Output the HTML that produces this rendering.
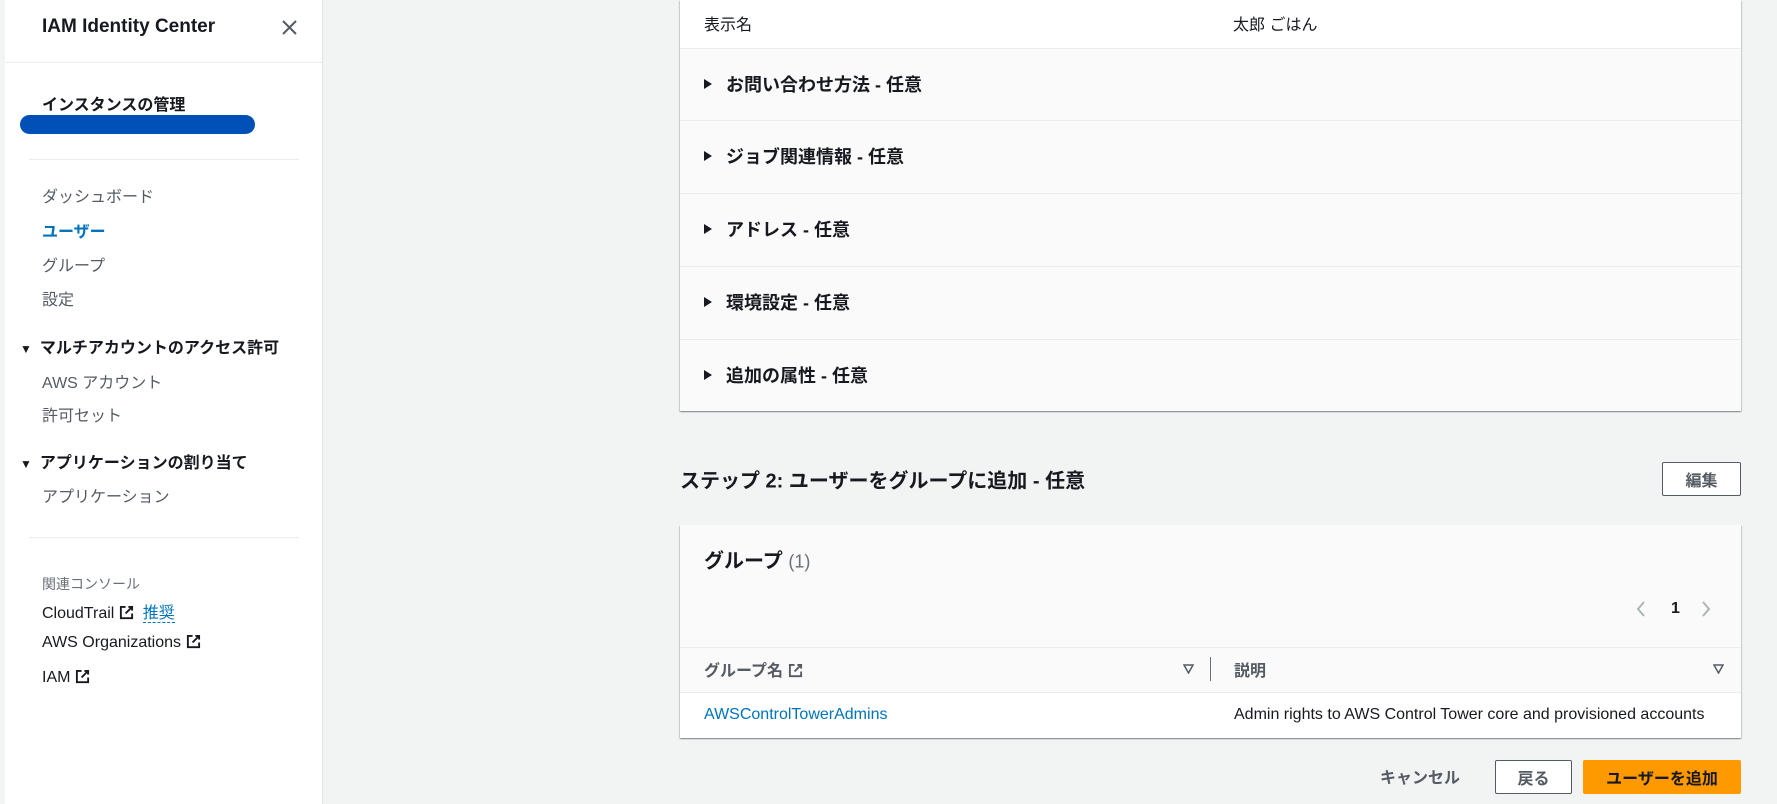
<!DOCTYPE html>
<html><head><meta charset="utf-8"><style>
*{margin:0;padding:0;box-sizing:border-box}
body{width:1777px;height:804px;overflow:hidden;background:#f2f3f3;font-family:"Liberation Sans","Noto Sans CJK JP",sans-serif;color:#16191f;position:relative}
.a{position:absolute;white-space:nowrap}
#side{position:absolute;left:5px;top:0;width:318px;height:804px;background:#fff;border-right:1px solid #dfe3e3}
.nav{font-size:16px;color:#545b64;transform:translateY(-50%)}
.b{font-weight:bold;color:#16191f}
.hl{position:absolute;height:1px;background:#eaeded}
.panel{position:absolute;left:680px;width:1061px;background:#fafafa;box-shadow:0 1px 1px 0 rgba(0,28,36,.3),1px 1px 1px 0 rgba(0,28,36,.15),-1px 1px 1px 0 rgba(0,28,36,.15)}
.row{position:absolute;left:0;width:100%;border-top:1px solid #eaeded}
.exp{position:absolute;left:24px;font-size:18px;font-weight:bold;transform:translateY(-50%)}
.tri{display:inline-block;width:0;height:0;border-left:8px solid #16191f;border-top:5px solid transparent;border-bottom:5px solid transparent;margin-right:14px;vertical-align:2px}
.btn{position:absolute;border:1px solid #545b64;background:#fff;font-size:16px;font-weight:bold;color:#545b64;display:flex;align-items:center;justify-content:center;border-radius:2px}
.ext{display:inline-block;vertical-align:-2px;margin-left:5px}
</style></head><body>
<div id="side">
<div class="a b" style="left:37px;top:27px;transform:translateY(-50%);font-size:19px">IAM Identity Center</div>
<svg class="a" style="left:277px;top:20px" width="15" height="15" viewBox="0 0 15 15"><path d="M1 1L14 14M14 1L1 14" stroke="#545b64" stroke-width="2"/></svg>
<div class="hl" style="left:0;top:62px;width:317px"></div>
<div class="a b nav" style="left:37px;top:103px;color:#16191f">インスタンスの管理</div>
<div class="a" style="left:15px;top:115px;width:235px;height:19px;background:#0050b8;border-radius:10px"></div>
<div class="hl" style="left:24px;top:159px;width:270px"></div>
<div class="a nav" style="left:37px;top:195px">ダッシュボード</div>
<div class="a nav" style="left:37px;top:230px;color:#0073bb;font-weight:bold">ユーザー</div>
<div class="a nav" style="left:37px;top:264px">グループ</div>
<div class="a nav" style="left:37px;top:298px">設定</div>
<div class="a nav b" style="left:15px;top:346px"><span style="font-size:12px;margin-right:8px">▼</span>マルチアカウントのアクセス許可</div>
<div class="a nav" style="left:37px;top:381px">AWS アカウント</div>
<div class="a nav" style="left:37px;top:414px">許可セット</div>
<div class="a nav b" style="left:15px;top:461px"><span style="font-size:12px;margin-right:8px">▼</span>アプリケーションの割り当て</div>
<div class="a nav" style="left:37px;top:495px">アプリケーション</div>
<div class="hl" style="left:24px;top:537px;width:270px"></div>
<div class="a nav" style="left:37px;top:584px;font-size:14px;color:#687078">関連コンソール</div>
<div class="a nav" style="left:37px;top:611px;color:#16191f">CloudTrail<svg class="ext" width="15" height="15" viewBox="0 0 16 16"><path d="M7 2H2v12h12V9M10 2h4v4M14 2L7 9" stroke="#16191f" stroke-width="2" fill="none"/></svg> <span style="color:#0073bb;border-bottom:1px dashed #0073bb;margin-left:4px">推奨</span></div>
<div class="a nav" style="left:37px;top:643px;color:#16191f">AWS Organizations<svg class="ext" width="15" height="15" viewBox="0 0 16 16"><path d="M7 2H2v12h12V9M10 2h4v4M14 2L7 9" stroke="#16191f" stroke-width="2" fill="none"/></svg></div>
<div class="a nav" style="left:37px;top:678px;color:#16191f">IAM<svg class="ext" width="15" height="15" viewBox="0 0 16 16"><path d="M7 2H2v12h12V9M10 2h4v4M14 2L7 9" stroke="#16191f" stroke-width="2" fill="none"/></svg></div>
</div>

<div class="panel" style="top:0;height:411px">
<div class="row" style="top:0;height:48px;background:#fff;border:0"></div>
<div class="a" style="left:24px;top:23px;transform:translateY(-50%);font-size:16px">表示名</div>
<div class="a" style="left:553px;top:23px;transform:translateY(-50%);font-size:16px">太郎 ごはん</div>
<div class="row" style="top:48px"></div><div class="exp" style="top:84px"><span class="tri"></span>お問い合わせ方法 - 任意</div>
<div class="row" style="top:120px"></div><div class="exp" style="top:156px"><span class="tri"></span>ジョブ関連情報 - 任意</div>
<div class="row" style="top:193px"></div><div class="exp" style="top:229px"><span class="tri"></span>アドレス - 任意</div>
<div class="row" style="top:266px"></div><div class="exp" style="top:302px"><span class="tri"></span>環境設定 - 任意</div>
<div class="row" style="top:339px"></div><div class="exp" style="top:375px"><span class="tri"></span>追加の属性 - 任意</div>
</div>

<div class="a b" style="left:680px;top:479px;transform:translateY(-50%);font-size:20px">ステップ 2: ユーザーをグループに追加 - 任意</div>
<div class="btn" style="left:1662px;top:462px;width:79px;height:34px">編集</div>

<div class="panel" style="top:525px;height:213px">
<div class="a b" style="left:24px;top:34px;transform:translateY(-50%);font-size:20px">グループ <span style="font-weight:normal;color:#687078;font-size:18px">(1)</span></div>
<svg class="a" style="left:955px;top:75px" width="12" height="18" viewBox="0 0 12 18"><path d="M9 2L3 9l6 7" stroke="#aab7b8" stroke-width="2" fill="none"/></svg>
<div class="a b" style="left:991px;top:84px;transform:translateY(-50%);font-size:16px">1</div>
<svg class="a" style="left:1020px;top:75px" width="12" height="18" viewBox="0 0 12 18"><path d="M3 2l6 7-6 7" stroke="#aab7b8" stroke-width="2" fill="none"/></svg>
<div class="row" style="top:122px"></div>
<div class="a b" style="left:24px;top:144px;transform:translateY(-50%);font-size:16px;color:#545b64">グループ名<svg class="ext" width="15" height="15" viewBox="0 0 16 16"><path d="M7 2H2v12h12V9M10 2h4v4M14 2L7 9" stroke="#545b64" stroke-width="2" fill="none"/></svg></div>
<svg class="a" style="left:503px;top:139px" width="11" height="10" viewBox="0 0 11 10"><path d="M1 1h9L5.5 9z" stroke="#545b64" stroke-width="1.5" fill="none"/></svg>
<div class="a" style="left:530px;top:132px;width:1px;height:24px;background:#687078"></div>
<div class="a b" style="left:554px;top:144px;transform:translateY(-50%);font-size:16px;color:#545b64">説明</div>
<svg class="a" style="left:1033px;top:139px" width="11" height="10" viewBox="0 0 11 10"><path d="M1 1h9L5.5 9z" stroke="#545b64" stroke-width="1.5" fill="none"/></svg>
<div class="row" style="top:167px;height:46px;background:#fff"></div>
<div class="a" style="left:24px;top:190px;transform:translateY(-50%);font-size:16px;color:#0073bb">AWSControlTowerAdmins</div>
<div class="a" style="left:554px;top:190px;transform:translateY(-50%);font-size:16px">Admin rights to AWS Control Tower core and provisioned accounts</div>
</div>

<div class="a b" style="left:1380px;top:776px;transform:translateY(-50%);font-size:16px;color:#545b64">キャンセル</div>
<div class="btn" style="left:1495px;top:760px;width:77px;height:34px">戻る</div>
<div class="btn" style="left:1583px;top:760px;width:158px;height:34px;background:#ff9900;border-color:#ff9900;color:#16191f">ユーザーを追加</div>
</body></html>
